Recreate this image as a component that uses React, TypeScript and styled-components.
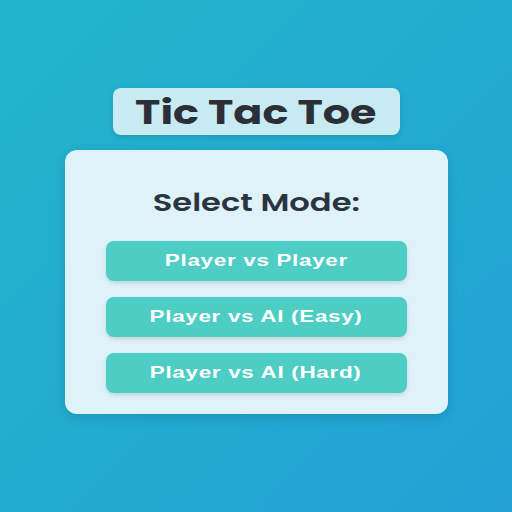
import { FC, ReactElement } from 'react';
import styled, { createGlobalStyle } from 'styled-components';

const GlobalStyle = createGlobalStyle`
  html, body {
    margin: 0;
    padding: 0;
  }
  body {
    font-family: "Liberation Sans", Arial, sans-serif;
  }
`;

const Page = styled.div`
  width: 512px;
  height: 512px;
  box-sizing: border-box;
  background: linear-gradient(135deg, #22b4cb 0%, #23a1d5 100%);
  display: flex;
  flex-direction: column;
  align-items: center;
  padding-top: 88px;
`;

const TitleBox = styled.div`
  width: 287px;
  height: 47px;
  box-sizing: border-box;
  background-color: #c8ebf3;
  border-radius: 8px;
  box-shadow: 0 2px 6px rgba(0, 0, 0, 0.12);
  display: flex;
  align-items: center;
  justify-content: center;
`;

// the reference text is drawn wide, so each label gets a horizontal stretch
const Stretch = styled.span<{ $x: number }>`
  display: inline-block;
  transform: scaleX(${({ $x }) => $x});
`;

const Title = styled.h1`
  margin: 0;
  font-family: "Poppins", "Open Sans", "DejaVu Sans", sans-serif;
  font-weight: 700;
  font-size: 34px;
  line-height: 40px;
  color: #2c3036;
`;

const Card = styled.div`
  margin-top: 15px;
  width: 383px;
  height: 264px;
  box-sizing: border-box;
  background-color: #def2f8;
  border-radius: 12px;
  box-shadow: 0 4px 12px rgba(0, 0, 0, 0.12);
  display: flex;
  flex-direction: column;
  align-items: center;
  padding-top: 38px;
`;

const Subtitle = styled.h2`
  margin: 0 0 23px;
  font-family: "Poppins", "Open Sans", "DejaVu Sans", sans-serif;
  font-weight: 600;
  font-size: 24px;
  line-height: 30px;
  color: #2c3440;
`;

const ButtonList = styled.div`
  display: flex;
  flex-direction: column;
  gap: 16px;
`;

const ModeButton = styled.button`
  width: 301px;
  height: 40px;
  padding: 0;
  border: none;
  border-radius: 8px;
  background-color: #4ecdc4;
  color: #ffffff;
  font-family: "Liberation Sans", Arial, sans-serif;
  font-weight: 700;
  font-size: 16px;
  letter-spacing: 0.5px;
  box-shadow: 0 2px 4px rgba(0, 0, 0, 0.12);
  cursor: pointer;
`;

const modes = ['Player vs Player', 'Player vs AI (Easy)', 'Player vs AI (Hard)'];

const App: FC = (): ReactElement => {
  return (
    <>
      <GlobalStyle />
      <Page>
        <TitleBox>
          <Title>
            <Stretch $x={1.26}>Tic Tac Toe</Stretch>
          </Title>
        </TitleBox>
        <Card>
          <Subtitle>
            <Stretch $x={1.34}>Select Mode:</Stretch>
          </Subtitle>
          <ButtonList>
            {modes.map((mode) => (
              <ModeButton key={mode}>
                <Stretch $x={1.4}>{mode}</Stretch>
              </ModeButton>
            ))}
          </ButtonList>
        </Card>
      </Page>
    </>
  );
};

export default App;
